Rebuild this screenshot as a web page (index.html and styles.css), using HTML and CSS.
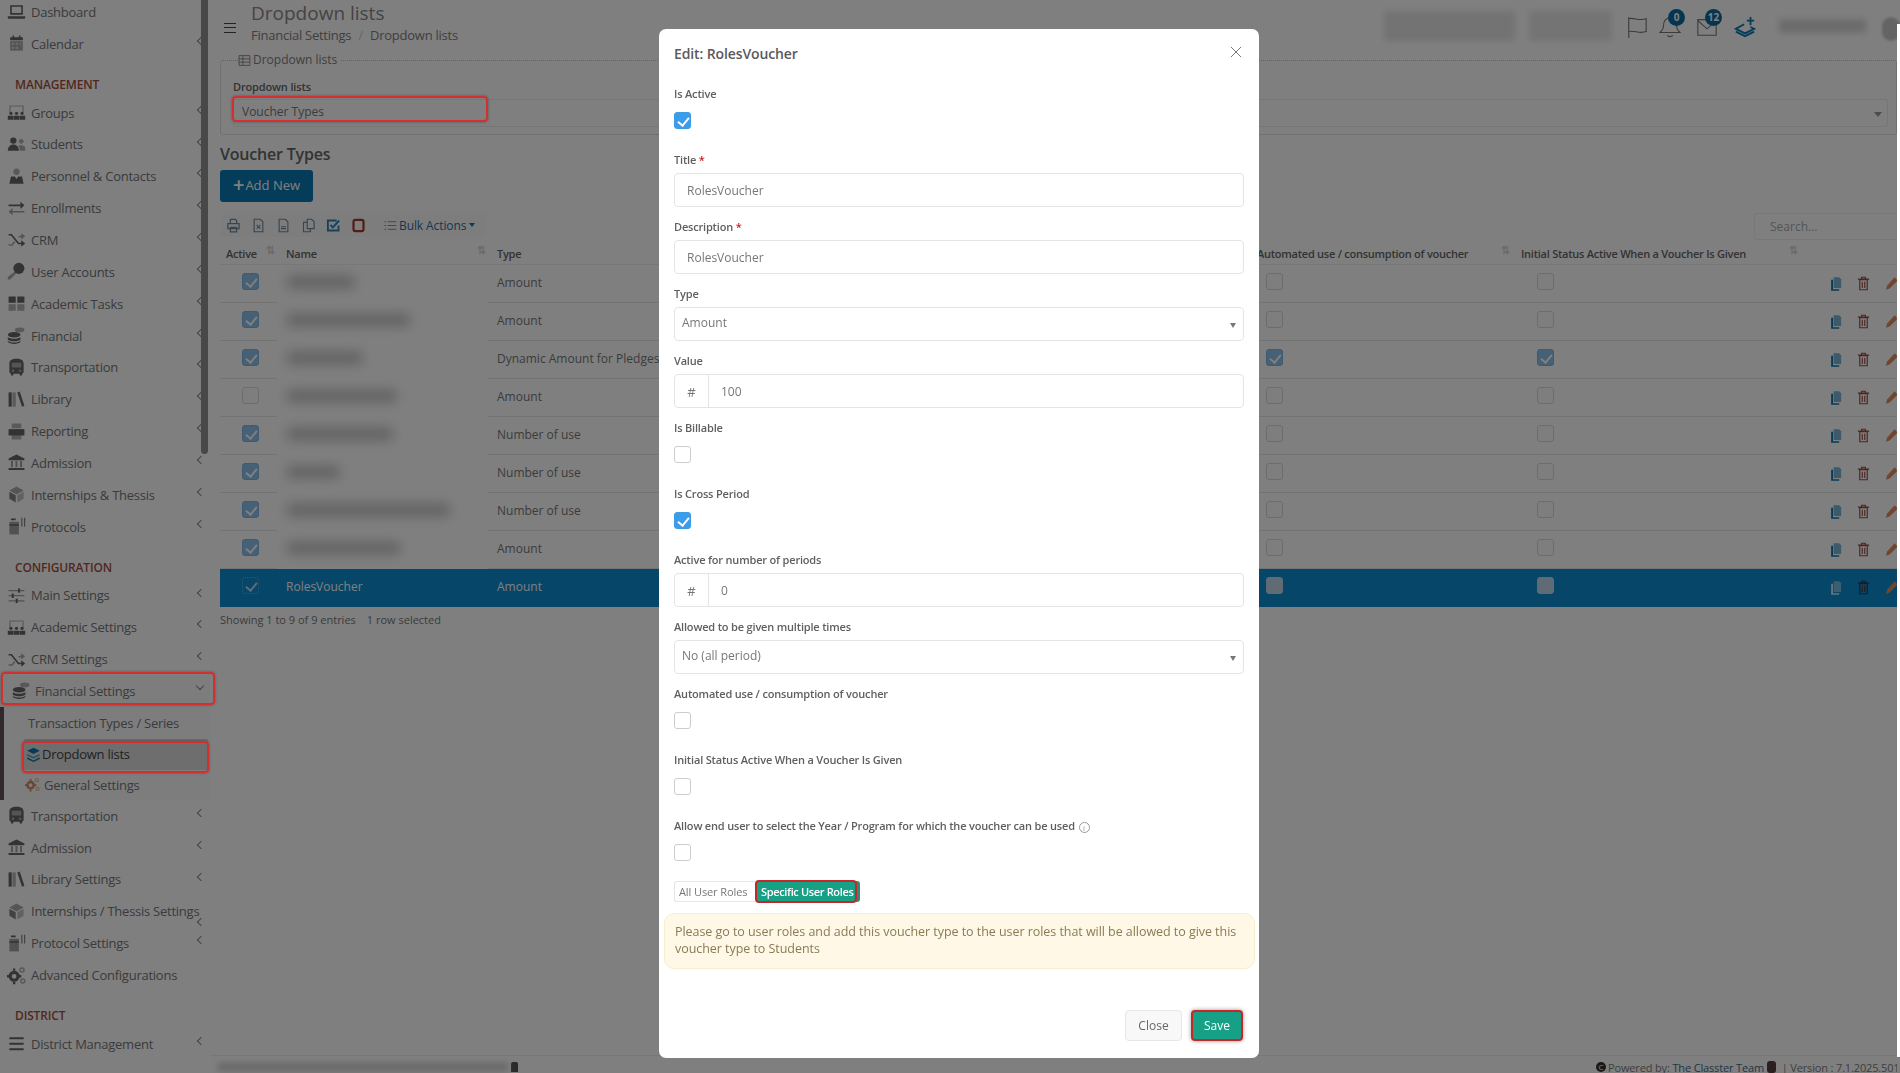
FILE: index.html
```html
<!DOCTYPE html>
<html lang="en">

<head>
    <meta charset="UTF-8">
    <title>Dropdown lists</title>
    <link rel="stylesheet" href="styles.css">
</head>

<body>
    <!-- Icon set -->
    <svg class="icon-defs" xmlns="http://www.w3.org/2000/svg">
        <symbol id="i-laptop" viewBox="0 0 24 24"><path d="M4 4h16v12H4z M6 6v8h12V6z" fill-rule="evenodd"/><path d="M1 18h22v1.500a1.500 1.500 0 0 1-1.500 1.500h-19A1.500 1.500 0 0 1 1 19.500z"/></symbol>
        <symbol id="i-calendar" viewBox="0 0 24 24"><path opacity=".55" d="M4 9h16v12H4z"/><path d="M4 4h3V2h2v2h6V2h2v2h3v4H4z"/><path fill="#fff" opacity=".5" d="M6 11h3v3H6zM11 11h3v3h-3zM16 11h2v3h-2zM6 16h3v3H6zM11 16h3v3h-3z"/></symbol>
        <symbol id="i-groups" viewBox="0 0 24 24"><path opacity=".5" d="M3 3h18v9h-1.500V4.500h-15V12H3z"/><circle cx="5" cy="13" r="2"/><circle cx="12" cy="13" r="2"/><circle cx="19" cy="13" r="2"/><path d="M1 16h7v5H1zM8.500 16h7v5h-7zM16 16h7v5h-7z"/></symbol>
        <symbol id="i-students" viewBox="0 0 24 24"><circle cx="8" cy="7" r="4"/><path d="M1 20c0-5 3-8 7-8s7 3 7 8z"/><g opacity=".5"><circle cx="18" cy="8" r="3"/><path d="M16 20c0-3-.5-5-2-6 1-1.500 7-2 9 1v5z"/></g></symbol>
        <symbol id="i-personnel" viewBox="0 0 24 24"><circle opacity=".5" cx="12" cy="6" r="4"/><path d="M5 12h5l2 3 2-3h5l2 9H3z"/></symbol>
        <symbol id="i-arrows" viewBox="0 0 24 24"><path d="M2 7h15V3.500L22 8l-5 4.500V9H2z"/><path opacity=".6" d="M22 15H7v-3.500L2 16l5 4.500V17h15z"/></symbol>
        <symbol id="i-shuffle" viewBox="0 0 24 24"><path d="M2 5h4l9 11h3v-3l5 4-5 4v-3h-4L5 7H2z"/><path opacity=".55" d="M2 18h4l3-4 1.500 1.500L7 20H2zM14 8l1 1.500 3-.5v3l5-4-5-4v3z"/></symbol>
        <symbol id="i-key" viewBox="0 0 24 24"><circle cx="15" cy="8" r="7"/><path opacity=".55" d="M10 12l2 2-8 8H1v-3z"/></symbol>
        <symbol id="i-tiles" viewBox="0 0 24 24"><path d="M2 3h9v8H2zM13 3h9v8h-9z"/><path opacity=".5" d="M2 13h9v8H2zM13 13h9v8h-9z"/></symbol>
        <symbol id="i-coins" viewBox="0 0 24 24"><ellipse opacity=".5" cx="16" cy="5" rx="6" ry="3"/><ellipse cx="9" cy="11" rx="8" ry="3.500"/><path d="M1 14c2 3 14 3 16 0v3c-2 3-14 3-16 0zM1 18.500c2 3 14 3 16 0V20c-2 3.500-14 3.500-16 0z"/></symbol>
        <symbol id="i-bus" viewBox="0 0 24 24"><path d="M12 1c6 0 9 2 9 6v10c0 1.500-1 2.500-2 3v2h-3v-2H8v2H5v-2c-1-.5-2-1.500-2-3V7c0-4 3-6 9-6z"/><path fill="#fff" opacity=".45" d="M6 6h12v6H6z"/><circle fill="#fff" opacity=".5" cx="7.500" cy="16" r="1.500"/><circle fill="#fff" opacity=".5" cx="16.500" cy="16" r="1.500"/></symbol>
        <symbol id="i-library" viewBox="0 0 24 24"><path d="M2 3h4v18H2z"/><path opacity=".5" d="M7 3h4v18H7z"/><path d="M13 3l3-1 6 18-3 1z"/></symbol>
        <symbol id="i-print" viewBox="0 0 24 24"><path opacity=".5" d="M6 2h12v6H6zM6 16h12v6H6z"/><path d="M2 9h20v8H2z"/></symbol>
        <symbol id="i-bank" viewBox="0 0 24 24"><path d="M12 2l10 5v2H2V7z"/><path opacity=".6" d="M5 10h2.500v8H5zM10.700 10h2.500v8h-2.500zM16.500 10H19v8h-2.500z"/><path d="M2 19h20v2.500H2z"/></symbol>
        <symbol id="i-box" viewBox="0 0 24 24"><path opacity=".55" d="M12 2l9 5-9 5-9-5z"/><path d="M3 8.500l8 4.500v9l-8-4.500z" opacity=".8"/><path d="M21 8.500L13 13v9l8-4.500z" opacity=".4"/></symbol>
        <symbol id="i-protocol" viewBox="0 0 24 24"><path opacity=".6" d="M3 6h12v16H3z"/><path d="M5 2h6v2H5zM3 9h12v2H3z"/><path d="M18 1h1.500v11H18zM21.500 1H23v11h-1.500z" opacity=".8"/></symbol>
        <symbol id="i-sliders" viewBox="0 0 24 24"><path d="M2 5h20v1.500H2zM2 11.500h20V13H2zM2 18h20v1.500H2z" opacity=".6"/><path d="M14 3h2.500v5.500H14zM6 9.500h2.500V15H6zM11 16h2.500v5.500H11z"/></symbol>
        <symbol id="i-gears" viewBox="0 0 24 24"><circle cx="9" cy="13" r="5" fill="none" stroke="currentColor" stroke-width="4"/><path d="M7.500 3h3v3h-3zM7.500 20h3v3h-3zM0 11.500h3v3H0zM15 11.500h3v3h-3z"/><circle opacity=".5" cx="19" cy="5" r="2.500" fill="none" stroke="currentColor" stroke-width="2"/><circle opacity=".5" cx="20" cy="19" r="2.500" fill="none" stroke="currentColor" stroke-width="2"/></symbol>
        <symbol id="i-menu" viewBox="0 0 24 24"><path d="M3 4h18v2.500H3zM3 11h18v2.500H3zM3 18h18v2.500H3z"/></symbol>
        <symbol id="i-layers" viewBox="0 0 24 24"><path d="M12 1l10 5-10 5L2 6z"/><path opacity=".7" d="M2 11l10 5 10-5v2.500l-10 5-10-5z"/><path d="M2 16.500l10 5 10-5V19l-10 5-10-5z"/></symbol>
        <symbol id="i-copy" viewBox="0 0 24 24"><path opacity=".55" d="M9 2h9l3 3v14H9z"/><path d="M5 6h3v15h10v2.500H5z"/></symbol>
        <symbol id="i-trash" viewBox="0 0 24 24"><path fill="none" stroke="currentColor" stroke-width="1.800" d="M6 6h12v16H6zM3 5h18M9 5V2h6v3M10 9v10M14 9v10"/></symbol>
        <symbol id="i-pencil" viewBox="0 0 24 24"><path d="M17 2l5 5L9 20l-6 2 2-7z"/></symbol>
        <symbol id="i-table" viewBox="0 0 24 24"><path fill="none" stroke="currentColor" stroke-width="1.600" d="M2 3h20v18H2zM2 9h20M2 15h20M9 3v18"/></symbol>
        <symbol id="i-printer" viewBox="0 0 24 24"><path fill="none" stroke="currentColor" stroke-width="2" d="M7 9V2h8l2 2v5M3 9h18v8H3zM7 15h10v7H7z"/></symbol>
        <symbol id="i-doc" viewBox="0 0 24 24"><path fill="none" stroke="currentColor" stroke-width="1.800" d="M5 2h10l4 4v16H5zM9 11l6 6M15 11l-6 6"/></symbol>
        <symbol id="i-doc2" viewBox="0 0 24 24"><path fill="none" stroke="currentColor" stroke-width="1.800" d="M5 2h10l4 4v16H5zM8 14h8M8 17h8"/></symbol>
        <symbol id="i-pages" viewBox="0 0 24 24"><path fill="none" stroke="currentColor" stroke-width="1.800" d="M10 2h7l4 4v11H10zM10 7H4v15h11v-5"/></symbol>
        <symbol id="i-checked" viewBox="0 0 24 24"><path fill="none" stroke="currentColor" stroke-width="3" d="M20 12v8H3V4h14"/><path fill="none" stroke="currentColor" stroke-width="3" d="M7 11l4 4 10-11"/></symbol>
        <symbol id="i-square" viewBox="0 0 24 24"><rect x="4" y="3" width="16" height="18" rx="3" fill="none" stroke="currentColor" stroke-width="3.500"/></symbol>
        <symbol id="i-list" viewBox="0 0 24 24"><path fill="none" stroke="currentColor" stroke-width="1.500" d="M7 5h16M7 12h16M7 19h16M1 5h3M1 12h3M1 19h3"/></symbol>
        <symbol id="i-flag" viewBox="0 0 24 24"><path fill="none" stroke="currentColor" stroke-width="1.200" d="M3 1v23M3 3c6-2 10 3 19 0v14c-8 3-13-2-19 0"/></symbol>
        <symbol id="i-bell" viewBox="0 0 24 24"><path fill="none" stroke="currentColor" stroke-width="1.200" d="M12 2c-5 0-7 4-7 8 0 5-2 6-4 8h22c-2-2-4-3-4-8 0-4-2-8-7-8zM9 21c1 2 5 2 6 0"/></symbol>
        <symbol id="i-mail" viewBox="0 0 24 24"><path fill="none" stroke="currentColor" stroke-width="1.200" d="M2 4h20v17H2zM2 5l10 9 10-9"/></symbol>
        <symbol id="i-stack" viewBox="0 0 24 24"><path fill="none" stroke="currentColor" stroke-width="2" d="M11 9L2 14l10 5 10-5-4-2M2 17l10 5 10-5M18 1v9M14 5h8"/></symbol>
        <symbol id="i-close" viewBox="0 0 12 12"><path fill="none" stroke="currentColor" stroke-width="1" d="M1 1l10 10M11 1L1 11"/></symbol>
    </svg>

    <div class="app">
        <!-- Sidebar -->
        <nav class="sidebar">
            <a class="nav-item"><svg class="nav-icon"><use href="#i-laptop"/></svg>Dashboard</a>
            <a class="nav-item has-sub"><svg class="nav-icon"><use href="#i-calendar"/></svg>Calendar</a>

            <div class="nav-title">MANAGEMENT</div>
            <a class="nav-item has-sub"><svg class="nav-icon"><use href="#i-groups"/></svg>Groups</a>
            <a class="nav-item has-sub"><svg class="nav-icon"><use href="#i-students"/></svg>Students</a>
            <a class="nav-item has-sub"><svg class="nav-icon"><use href="#i-personnel"/></svg>Personnel &amp; Contacts</a>
            <a class="nav-item has-sub"><svg class="nav-icon"><use href="#i-arrows"/></svg>Enrollments</a>
            <a class="nav-item has-sub"><svg class="nav-icon"><use href="#i-shuffle"/></svg>CRM</a>
            <a class="nav-item has-sub"><svg class="nav-icon"><use href="#i-key"/></svg>User Accounts</a>
            <a class="nav-item has-sub"><svg class="nav-icon"><use href="#i-tiles"/></svg>Academic Tasks</a>
            <a class="nav-item has-sub"><svg class="nav-icon"><use href="#i-coins"/></svg>Financial</a>
            <a class="nav-item has-sub"><svg class="nav-icon"><use href="#i-bus"/></svg>Transportation</a>
            <a class="nav-item has-sub"><svg class="nav-icon"><use href="#i-library"/></svg>Library</a>
            <a class="nav-item has-sub"><svg class="nav-icon"><use href="#i-print"/></svg>Reporting</a>
            <a class="nav-item has-sub"><svg class="nav-icon"><use href="#i-bank"/></svg>Admission</a>
            <a class="nav-item has-sub"><svg class="nav-icon"><use href="#i-box"/></svg>Internships &amp; Thessis</a>
            <a class="nav-item has-sub"><svg class="nav-icon"><use href="#i-protocol"/></svg>Protocols</a>

            <div class="nav-title">CONFIGURATION</div>
            <a class="nav-item has-sub"><svg class="nav-icon"><use href="#i-sliders"/></svg>Main Settings</a>
            <a class="nav-item has-sub"><svg class="nav-icon"><use href="#i-groups"/></svg>Academic Settings</a>
            <a class="nav-item has-sub"><svg class="nav-icon"><use href="#i-shuffle"/></svg>CRM Settings</a>
            <div class="nav-open">
                <a class="nav-item open"><svg class="nav-icon"><use href="#i-coins"/></svg>Financial Settings</a>
                <div class="nav-sub">
                    <a class="sub-item plain">Transaction Types / Series</a>
                    <a class="sub-item active"><svg class="sub-icon blue"><use href="#i-layers"/></svg>Dropdown lists</a>
                    <a class="sub-item"><svg class="sub-icon orange"><use href="#i-gears"/></svg>General Settings</a>
                </div>
            </div>
            <a class="nav-item has-sub"><svg class="nav-icon"><use href="#i-bus"/></svg>Transportation</a>
            <a class="nav-item has-sub"><svg class="nav-icon"><use href="#i-bank"/></svg>Admission</a>
            <a class="nav-item has-sub"><svg class="nav-icon"><use href="#i-library"/></svg>Library Settings</a>
            <a class="nav-item has-sub low-arrow"><svg class="nav-icon"><use href="#i-box"/></svg>Internships / Thessis Settings</a>
            <a class="nav-item has-sub"><svg class="nav-icon"><use href="#i-protocol"/></svg>Protocol Settings</a>
            <a class="nav-item"><svg class="nav-icon"><use href="#i-gears"/></svg>Advanced Configurations</a>

            <div class="nav-title">DISTRICT</div>
            <a class="nav-item has-sub"><svg class="nav-icon"><use href="#i-menu"/></svg>District Management</a>
        </nav>

        <!-- Main content -->
        <main class="main">
            <header class="topbar">
                <div class="hamburger-lines"></div>
                <div class="page-title">
                    <h1>Dropdown lists</h1>
                    <div class="breadcrumb">Financial Settings <span class="sep">/</span> Dropdown lists</div>
                </div>
                <div class="top-right">
                    <span class="smudge smudge-a"></span>
                    <span class="smudge smudge-b"></span>
                    <svg class="top-icon"><use href="#i-flag"/></svg>
                    <span class="top-badged"><svg class="top-icon"><use href="#i-bell"/></svg><span class="badge">0</span></span>
                    <span class="top-badged"><svg class="top-icon"><use href="#i-mail"/></svg><span class="badge">12</span></span>
                    <svg class="top-icon stack"><use href="#i-stack"/></svg>
                    <span class="smudge smudge-c"></span>
                    <span class="avatar"></span>
                </div>
            </header>

            <fieldset class="filter">
                <legend><svg class="legend-icon"><use href="#i-table"/></svg>Dropdown lists</legend>
                <label class="filter-label">Dropdown lists</label>
                <div class="filter-select">Voucher Types</div>
            </fieldset>

            <h2 class="list-title">Voucher Types</h2>
            <button class="add-btn"><span class="plus">+</span>Add New</button>

            <div class="toolbar-row">
                <div class="toolbar">
                    <svg class="tool"><use href="#i-printer"/></svg>
                    <svg class="tool"><use href="#i-doc"/></svg>
                    <svg class="tool"><use href="#i-doc2"/></svg>
                    <svg class="tool"><use href="#i-pages"/></svg>
                    <svg class="tool tool-blue"><use href="#i-checked"/></svg>
                    <svg class="tool tool-red"><use href="#i-square"/></svg>
                    <span class="bulk"><svg class="bulk-icon"><use href="#i-list"/></svg>Bulk Actions<span class="bulk-caret"></span></span>
                </div>
                <div class="search">Search...</div>
            </div>

            <table class="grid">
                <colgroup>
                    <col class="c-active"><col class="c-name"><col class="c-type"><col class="c-auto"><col class="c-init"><col class="c-act">
                </colgroup>
                <thead>
                    <tr>
                        <th class="sort th-active">Active</th>
                        <th class="sort">Name</th>
                        <th>Type</th>
                        <th class="sort">Automated use / consumption of voucher</th>
                        <th class="sort">Initial Status Active When a Voucher Is Given</th>
                        <th></th>
                    </tr>
                </thead>
                <tbody>
                    <tr>
                        <td class="td-active"><span class="check on"></span></td>
                        <td class="td-name"><span class="blur b1"></span></td>
                        <td>Amount</td>
                        <td class="td-auto"><span class="check"></span></td>
                        <td class="td-init"><span class="check"></span></td>
                        <td class="td-act"><svg class="act copy"><use href="#i-copy"/></svg><svg class="act trash"><use href="#i-trash"/></svg><svg class="act pencil"><use href="#i-pencil"/></svg></td>
                    </tr>
                    <tr>
                        <td class="td-active"><span class="check on"></span></td>
                        <td class="td-name"><span class="blur b2"></span></td>
                        <td>Amount</td>
                        <td class="td-auto"><span class="check"></span></td>
                        <td class="td-init"><span class="check"></span></td>
                        <td class="td-act"><svg class="act copy"><use href="#i-copy"/></svg><svg class="act trash"><use href="#i-trash"/></svg><svg class="act pencil"><use href="#i-pencil"/></svg></td>
                    </tr>
                    <tr>
                        <td class="td-active"><span class="check on"></span></td>
                        <td class="td-name"><span class="blur b3"></span></td>
                        <td>Dynamic Amount for Pledges</td>
                        <td class="td-auto"><span class="check on"></span></td>
                        <td class="td-init"><span class="check on"></span></td>
                        <td class="td-act"><svg class="act copy"><use href="#i-copy"/></svg><svg class="act trash"><use href="#i-trash"/></svg><svg class="act pencil"><use href="#i-pencil"/></svg></td>
                    </tr>
                    <tr>
                        <td class="td-active"><span class="check"></span></td>
                        <td class="td-name"><span class="blur b4"></span></td>
                        <td>Amount</td>
                        <td class="td-auto"><span class="check"></span></td>
                        <td class="td-init"><span class="check"></span></td>
                        <td class="td-act"><svg class="act copy"><use href="#i-copy"/></svg><svg class="act trash"><use href="#i-trash"/></svg><svg class="act pencil"><use href="#i-pencil"/></svg></td>
                    </tr>
                    <tr>
                        <td class="td-active"><span class="check on"></span></td>
                        <td class="td-name"><span class="blur b5"></span></td>
                        <td>Number of use</td>
                        <td class="td-auto"><span class="check"></span></td>
                        <td class="td-init"><span class="check"></span></td>
                        <td class="td-act"><svg class="act copy"><use href="#i-copy"/></svg><svg class="act trash"><use href="#i-trash"/></svg><svg class="act pencil"><use href="#i-pencil"/></svg></td>
                    </tr>
                    <tr>
                        <td class="td-active"><span class="check on"></span></td>
                        <td class="td-name"><span class="blur b6"></span></td>
                        <td>Number of use</td>
                        <td class="td-auto"><span class="check"></span></td>
                        <td class="td-init"><span class="check"></span></td>
                        <td class="td-act"><svg class="act copy"><use href="#i-copy"/></svg><svg class="act trash"><use href="#i-trash"/></svg><svg class="act pencil"><use href="#i-pencil"/></svg></td>
                    </tr>
                    <tr>
                        <td class="td-active"><span class="check on"></span></td>
                        <td class="td-name"><span class="blur b7"></span></td>
                        <td>Number of use</td>
                        <td class="td-auto"><span class="check"></span></td>
                        <td class="td-init"><span class="check"></span></td>
                        <td class="td-act"><svg class="act copy"><use href="#i-copy"/></svg><svg class="act trash"><use href="#i-trash"/></svg><svg class="act pencil"><use href="#i-pencil"/></svg></td>
                    </tr>
                    <tr>
                        <td class="td-active"><span class="check on"></span></td>
                        <td class="td-name"><span class="blur b8"></span></td>
                        <td>Amount</td>
                        <td class="td-auto"><span class="check"></span></td>
                        <td class="td-init"><span class="check"></span></td>
                        <td class="td-act"><svg class="act copy"><use href="#i-copy"/></svg><svg class="act trash"><use href="#i-trash"/></svg><svg class="act pencil"><use href="#i-pencil"/></svg></td>
                    </tr>
                    <tr class="selected">
                        <td class="td-active"><span class="check on"></span></td>
                        <td>RolesVoucher</td>
                        <td>Amount</td>
                        <td class="td-auto"><span class="check"></span></td>
                        <td class="td-init"><span class="check"></span></td>
                        <td class="td-act"><svg class="act copy"><use href="#i-copy"/></svg><svg class="act trash"><use href="#i-trash"/></svg><svg class="act pencil"><use href="#i-pencil"/></svg></td>
                    </tr>
                </tbody>
            </table>

            <div class="grid-info"><span>Showing 1 to 9 of 9 entries</span><span>1 row selected</span></div>

            <footer class="footer">
                <span class="foot-smudge"></span>
                <span class="foot-pin"></span>
                <span class="foot-text"><span class="foot-c">C</span>Powered by: <a>The Classter Team</a> <span class="foot-logo"></span> | Version : 7.1.2025.5019</span>
            </footer>
        </main>
    </div>

    <!-- Modal layer -->
    <div class="backdrop"></div>

    <!-- Red marks drawn on the screenshot -->
    <div class="mark mark-select"></div>
    <div class="mark mark-fin"></div>
    <div class="mark mark-sub"></div>
    <div class="edge-strip"></div>

    <div class="modal-wrap">
        <div class="modal">
            <div class="modal-header">
                <div class="modal-title">Edit: RolesVoucher</div>
                <svg class="modal-close"><use href="#i-close"/></svg>
            </div>
            <div class="modal-body">
                <div class="check-group">
                    <label>Is Active</label>
                    <span class="box on"></span>
                </div>
                <div class="form-group">
                    <label>Title <span class="req">*</span></label>
                    <div class="field">RolesVoucher</div>
                </div>
                <div class="form-group">
                    <label>Description <span class="req">*</span></label>
                    <div class="field">RolesVoucher</div>
                </div>
                <div class="form-group">
                    <label>Type</label>
                    <div class="field field-select">Amount</div>
                </div>
                <div class="form-group">
                    <label>Value</label>
                    <div class="field field-addon"><span class="addon">#</span><span class="addon-value">100</span></div>
                </div>
                <div class="check-group">
                    <label>Is Billable</label>
                    <span class="box"></span>
                </div>
                <div class="check-group">
                    <label>Is Cross Period</label>
                    <span class="box on"></span>
                </div>
                <div class="form-group">
                    <label>Active for number of periods</label>
                    <div class="field field-addon"><span class="addon">#</span><span class="addon-value">0</span></div>
                </div>
                <div class="form-group">
                    <label>Allowed to be given multiple times</label>
                    <div class="field field-select">No (all period)</div>
                </div>
                <div class="check-group">
                    <label>Automated use / consumption of voucher</label>
                    <span class="box"></span>
                </div>
                <div class="check-group">
                    <label>Initial Status Active When a Voucher Is Given</label>
                    <span class="box"></span>
                </div>
                <div class="check-group last">
                    <label>Allow end user to select the Year / Program for which the voucher can be used <span class="info">i</span></label>
                    <span class="box"></span>
                </div>
                <div class="segment">
                    <span class="seg">All User Roles</span>
                    <span class="seg seg-on">Specific User Roles</span>
                </div>
                <div class="alert">Please go to user roles and add this voucher type to the user roles that will be allowed to give this voucher type to Students</div>
            </div>
            <div class="modal-footer">
                <button class="btn-close">Close</button>
                <button class="btn-save">Save</button>
            </div>
        </div>
    </div>
</body>

</html>
```

FILE: styles.css
```css
* {
    box-sizing: border-box;
}

html,
body {
    margin: 0;
    height: 100%;
    overflow: hidden;
}

body {
    font-family: "Open Sans", "Liberation Sans", sans-serif;
    font-size: 12px;
    color: #777;
    background-color: #ffffff;
}

.icon-defs {
    position: absolute;
    width: 0;
    height: 0;
}

.app {
    display: flex;
    height: 1073px;
}

/* Sidebar */
.sidebar {
    width: 210px;
    flex-shrink: 0;
    height: 1073px;
    overflow: hidden;
    margin-top: -4px;
    position: relative;
    color: #747678;
    font-size: 13px;
    letter-spacing: -0.25px;
}

/* sidebar scrollbar thumb */
.sidebar::after {
    content: "";
    position: absolute;
    left: 201px;
    top: 0;
    width: 7px;
    height: 458px;
    border-radius: 4px;
    background-color: #909090;
}

.nav-item {
    display: flex;
    align-items: center;
    height: 31.85px;
    padding-left: 7px;
    white-space: nowrap;
    position: relative;
}

.nav-icon {
    width: 19px;
    height: 19px;
    margin-right: 5px;
    flex-shrink: 0;
    fill: #666;
    color: #666;
}

.has-sub::after {
    content: "";
    position: absolute;
    left: 198px;
    top: 10px;
    width: 5px;
    height: 5px;
    border-left: 1px solid #888;
    border-bottom: 1px solid #888;
    transform: rotate(45deg);
}

.low-arrow::after {
    top: 24px;
}

.nav-title {
    height: 37px;
    padding: 16px 0 0 15px;
    font-size: 12px;
    line-height: 17px;
    font-weight: 600;
    letter-spacing: -0.15px;
    color: #a5503c;
}

.nav-open {
    background-color: #fbfbfb;
}

.nav-item.open {
    padding-left: 12px;
}

.nav-item.open .nav-icon {
    margin-right: 4px;
}

.nav-item.open::after {
    content: "";
    position: absolute;
    left: 197px;
    top: 8px;
    width: 5px;
    height: 5px;
    border-left: 1px solid #888;
    border-bottom: 1px solid #888;
    transform: rotate(-45deg);
}

.nav-sub {
    border-left: 4px solid #5f5254;
    padding-top: 1px;
    height: 93px;
}

.sub-item {
    display: flex;
    align-items: center;
    height: 30px;
    padding-left: 21px;
    white-space: nowrap;
}

.sub-item.plain {
    padding-left: 24px;
    height: 31px;
}

.sub-item.active {
    color: #444;
    background-color: #dcdcdc;
    margin: 0 2px 0 20px;
    padding-left: 2px;
    height: 31px;
}

.sub-icon {
    width: 15px;
    height: 15px;
    margin-right: 1px;
    flex-shrink: 0;
}

.sub-item:last-child .sub-icon {
    margin-right: 4px;
}

.blue {
    fill: #0b79b3;
    color: #0b79b3;
}

.orange {
    fill: #d9886a;
    color: #d9886a;
}

/* Main */
.main {
    flex: 1;
    min-width: 0;
    height: 1073px;
    padding: 0 3px 0 10px;
    display: flex;
    flex-direction: column;
    position: relative;
    overflow: hidden;
}

.topbar {
    display: flex;
    height: 59px;
    flex-shrink: 0;
}

.hamburger-lines {
    width: 12px;
    height: 10px;
    margin: 23px 15px 0 4px;
    border-top: 1px solid #444;
    border-bottom: 1px solid #444;
    position: relative;
    flex-shrink: 0;
}

.hamburger-lines::after {
    content: "";
    position: absolute;
    left: 0;
    right: 0;
    top: 3px;
    border-top: 1px solid #444;
}

.page-title h1 {
    margin: 0;
    font-size: 19px;
    line-height: 26px;
    font-weight: 400;
    color: #888;
    white-space: nowrap;
}

.breadcrumb {
    font-size: 13px;
    line-height: 18px;
    letter-spacing: -0.25px;
    color: #808080;
    white-space: nowrap;
}

.breadcrumb .sep {
    color: #ccc;
    margin: 0 4px;
}

.top-right {
    margin-left: auto;
    display: flex;
    align-items: flex-start;
    padding-top: 11px;
    flex-shrink: 0;
}

.smudge {
    display: block;
    height: 30px;
    background-color: #e6e6e6;
    filter: blur(3px);
}

.smudge-a {
    width: 131px;
    margin-right: 14px;
}

.smudge-b {
    width: 83px;
    margin-right: 14px;
    background-color: #e8e8e8;
}

.smudge-c {
    width: 87px;
    height: 14px;
    margin: 8px 16px 0 23px;
    background-color: #d8d8d8;
}

.top-icon {
    display: block;
    width: 22px;
    height: 24px;
    color: #777;
    margin: 4px 11px 0 0;
}

.top-icon.stack {
    color: #0b79b3;
    margin: 4px 0 0 1px;
}

.top-badged {
    position: relative;
    display: block;
    margin-right: 15px;
}

.top-badged .top-icon {
    margin-right: 0;
}

.badge {
    position: absolute;
    left: 9px;
    top: -2px;
    width: 17px;
    height: 17px;
    border-radius: 50%;
    background-color: #0a6aa0;
    color: #fff;
    font-size: 10px;
    font-weight: 700;
    line-height: 17px;
    text-align: center;
}

.avatar {
    display: block;
    width: 18px;
    height: 24px;
    margin: 6px -3px 0 0;
    border-radius: 9px;
    background-color: #c9c9c9;
    filter: blur(1px);
}

/* Filter box */
.filter {
    margin: -9px 0 0;
    padding: 8px 8px 8px 12px;
    border: 1px dotted #c4c4c4;
    border-radius: 3px;
    min-width: 0;
    height: 85px;
    flex-shrink: 0;
}

.filter legend {
    margin-left: 5px;
    padding: 0 4px 0 0;
    display: flex;
    align-items: center;
    font-size: 12px;
    line-height: 20px;
    color: #808080;
}

.legend-icon {
    width: 13px;
    height: 13px;
    margin-right: 2px;
    color: #808080;
}

.filter-label {
    display: block;
    font-size: 11px;
    line-height: 17px;
    font-weight: 600;
    letter-spacing: -0.15px;
    color: #666;
    margin-bottom: 4px;
}

.filter-select {
    height: 28px;
    padding-left: 8px;
    line-height: 24px;
    font-size: 12px;
    color: #777;
    background-color: #fff;
    border: 1px solid #ececec;
    border-radius: 3px;
    position: relative;
}

.filter-select::after {
    content: "";
    position: absolute;
    right: 5px;
    top: 12px;
    border-left: 4px solid transparent;
    border-right: 4px solid transparent;
    border-top: 5px solid #999;
}

.list-title {
    margin: 7px 0 4px;
    font-size: 16px;
    line-height: 24px;
    font-weight: 600;
    letter-spacing: -0.2px;
    color: #666;
    flex-shrink: 0;
}

.add-btn {
    width: 93px;
    height: 32px;
    padding: 0 0 3px;
    border: none;
    border-radius: 3px;
    background-color: #0a78b4;
    color: #fff;
    font-family: inherit;
    font-size: 13px;
    flex-shrink: 0;
}

.plus {
    font-size: 20px;
    font-weight: 600;
    line-height: 18px;
    vertical-align: -2px;
    margin-right: 1px;
}

.toolbar-row {
    display: flex;
    justify-content: space-between;
    margin-top: 11px;
    height: 27px;
    flex-shrink: 0;
}

.toolbar {
    display: flex;
    align-items: center;
    height: 24px;
    width: 266px;
    background-color: #fbfbfb;
    border-radius: 4px;
    padding-left: 5px;
    margin-left: 1px;
}

.tool {
    width: 15px;
    height: 15px;
    margin-right: 10px;
    color: #6d8aa0;
    flex-shrink: 0;
}

.tool-blue {
    color: #2a83bf;
}

.tool-red {
    color: #a03a2e;
    margin-right: 18px;
}

.bulk {
    display: flex;
    align-items: center;
    color: #2f6f9b;
    font-size: 12px;
    letter-spacing: -0.1px;
    white-space: nowrap;
}

.bulk-icon {
    width: 13px;
    height: 13px;
    margin-right: 2px;
    color: #5a7d96;
}

.bulk-caret {
    margin-left: 3px;
    border-left: 3px solid transparent;
    border-right: 3px solid transparent;
    border-top: 4px solid #0b79b3;
}

.search {
    width: 143px;
    height: 27px;
    padding-left: 15px;
    line-height: 26px;
    font-size: 12px;
    color: #aaa;
    border: 1px solid #eee;
    border-right: none;
    border-radius: 4px 0 0 4px;
}

/* Table */
.grid {
    width: 1677px;
    table-layout: fixed;
    border-collapse: collapse;
    flex-shrink: 0;
}

.c-active { width: 57px; }
.c-name { width: 211px; }
.c-type { width: 760px; }
.c-auto { width: 264px; }
.c-init { width: 288px; }
.c-act { width: 97px; }

.grid th {
    height: 24px;
    padding: 4px 0 0 9px;
    text-align: left;
    font-size: 11px;
    font-weight: 600;
    letter-spacing: -0.25px;
    color: #666;
    border-bottom: 1px solid #eee;
    white-space: nowrap;
    position: relative;
}

.grid .th-active {
    padding-left: 6px;
}

/* little sort arrows on the header */
.grid th.sort::after {
    content: "⇅";
    position: absolute;
    right: 2px;
    top: 2px;
    font-size: 11px;
    color: #d4d4d4;
}

.grid td {
    height: 38px;
    padding: 0 0 2px 9px;
    font-size: 12px;
    color: #777;
    border-bottom: 1px solid #e6e6e6;
    white-space: nowrap;
    overflow: hidden;
}

.grid .td-name {
    border-bottom-color: transparent;
}

.grid .td-active {
    padding-left: 22px;
}

.grid .td-auto {
    padding-left: 18px;
}

.grid .td-init {
    padding-left: 25px;
}

.grid .td-act {
    padding-left: 28px;
    overflow: hidden;
}

.check {
    display: block;
    width: 17px;
    height: 17px;
    margin-top: -2px;
    border: 1px solid #d8d8d8;
    border-radius: 3px;
    background-color: #fdfdfd;
    position: relative;
}

.check.on {
    background-color: #8cc0ec;
    border-color: #7fb5e2;
}

.check.on::after,
.box.on::after {
    content: "";
    position: absolute;
    left: 5px;
    top: 2px;
    width: 5px;
    height: 9px;
    border-right: 2px solid #fff;
    border-bottom: 2px solid #fff;
    transform: rotate(40deg);
}

.blur {
    display: block;
    height: 14px;
    border-radius: 7px;
    background-color: #c9c9c9;
    filter: blur(6px);
}

.b1 { width: 70px; }
.b2 { width: 125px; }
.b3 { width: 78px; }
.b4 { width: 112px; }
.b5 { width: 108px; }
.b6 { width: 55px; }
.b7 { width: 165px; }
.b8 { width: 115px; }

.act {
    width: 15px;
    height: 15px;
    margin-right: 13px;
    vertical-align: middle;
}

.act.copy {
    fill: #0b79b3;
    color: #0b79b3;
}

.act.trash {
    color: #9a4a40;
}

.act.pencil {
    fill: #e08c62;
}

.selected td {
    background-color: #0a8cd2;
    color: #fff;
    border-bottom-color: #0a8cd2;
}

.selected .check {
    background-color: #c2d6e6;
    border-color: #c2d6e6;
}

.selected .check.on {
    background-color: #0a8cd2;
    border-color: #5fb0de;
    border-style: dotted;
}

.selected .check.on::after {
    border-color: #c2d6e6;
}

.selected .act.copy {
    fill: #d4e6f3;
    color: #d4e6f3;
}

.selected .act.trash {
    color: #4a2f2f;
}

.grid-info {
    display: flex;
    gap: 11px;
    margin-top: 5px;
    font-size: 11px;
    line-height: 16px;
    color: #777;
    flex-shrink: 0;
}

.footer {
    margin-top: auto;
    height: 18px;
    padding-top: 5px;
    border-top: 1px solid #eee;
    display: flex;
    align-items: center;
    margin-left: -10px;
    flex-shrink: 0;
    font-size: 11px;
    letter-spacing: -0.15px;
    color: #808080;
    white-space: nowrap;
    overflow: hidden;
}

.foot-smudge {
    display: block;
    width: 290px;
    height: 8px;
    margin-left: 8px;
    background-color: #cfcfcf;
    filter: blur(3px);
    flex-shrink: 0;
}

.foot-pin {
    display: block;
    width: 7px;
    height: 10px;
    margin-left: 3px;
    background-color: #555;
    border-radius: 2px 2px 0 0;
    flex-shrink: 0;
}

.foot-text {
    margin-left: 1078px;
    display: flex;
    align-items: center;
    white-space: pre;
}

.foot-text a {
    color: #3e6c8f;
}

.foot-c {
    width: 10px;
    height: 10px;
    margin-right: 2px;
    border-radius: 50%;
    background-color: #333;
    color: #fff;
    font-size: 8px;
    line-height: 10px;
    text-align: center;
}

.foot-logo {
    width: 9px;
    height: 12px;
    margin: 0 3px;
    border-radius: 3px;
    background-color: #5a3f3f;
}

/* Dim layer behind the dialog */
.backdrop {
    position: fixed;
    inset: 0;
    background-color: rgba(0, 0, 0, 0.5);
}

.mark {
    position: fixed;
    border: 2px solid #d32f2f;
    border-radius: 4px;
    box-shadow: 0 0 3px rgba(0, 0, 0, 0.35);
}

.mark-select {
    left: 232px;
    top: 96px;
    width: 256px;
    height: 26px;
}

.mark-fin {
    left: 1px;
    top: 672px;
    width: 214px;
    height: 33px;
}

.mark-sub {
    left: 22px;
    top: 741px;
    width: 187px;
    height: 32px;
}

.edge-strip {
    position: fixed;
    right: 0;
    top: 24px;
    bottom: 16px;
    width: 3px;
    background-color: #ffffff;
}

/* Dialog */
.modal-wrap {
    position: fixed;
    inset: 0;
    padding: 29px 0 15px 18px;
    display: flex;
    justify-content: center;
}

.modal {
    width: 600px;
    height: 1029px;
    background-color: #ffffff;
    border-radius: 7px;
    display: flex;
    flex-direction: column;
    color: #666;
}

.modal-header {
    height: 56px;
    padding: 0 17px 0 15px;
    display: flex;
    justify-content: space-between;
    flex-shrink: 0;
}

.modal-title {
    margin-top: 15px;
    font-size: 14px;
    line-height: 20px;
    font-weight: 600;
    letter-spacing: -0.12px;
    color: #5a5a5a;
}

.modal-close {
    width: 12px;
    height: 12px;
    margin-top: 17px;
    color: #777;
}

.modal-body {
    padding: 0 15px;
}

.modal-body label {
    display: block;
    font-size: 11px;
    line-height: 17px;
    font-weight: 600;
    letter-spacing: -0.18px;
    color: #5f5f5f;
    white-space: nowrap;
}

.req {
    color: #d01c1c;
}

.info {
    display: inline-block;
    width: 11px;
    height: 11px;
    margin-left: 1px;
    border: 1px solid #999;
    border-radius: 50%;
    color: #999;
    font-size: 8px;
    line-height: 9px;
    font-weight: 400;
    text-align: center;
    vertical-align: -1px;
}

.form-group {
    height: 56px;
    margin-bottom: 11px;
}

.form-group label {
    margin-bottom: 5px;
}

.field {
    height: 34px;
    padding-left: 12px;
    line-height: 34px;
    font-size: 12px;
    color: #777;
    border: 1px solid #e4e4e4;
    border-radius: 4px;
}

.field-select {
    padding-left: 7px;
    line-height: 29px;
    position: relative;
}

.field-select::after {
    content: "";
    position: absolute;
    right: 7px;
    top: 15px;
    border-left: 3.5px solid transparent;
    border-right: 3.5px solid transparent;
    border-top: 5px solid #777;
}

.field-addon {
    display: flex;
    padding-left: 0;
}

.addon {
    width: 34px;
    text-align: center;
    border-right: 1px solid #e4e4e4;
    font-size: 13px;
}

.addon-value {
    padding-left: 12px;
}

.check-group {
    height: 55px;
    margin-bottom: 11px;
}

.check-group.last {
    margin-bottom: 9px;
}

.check-group label {
    margin-bottom: 10px;
}

.box {
    display: block;
    width: 17px;
    height: 17px;
    border: 1px solid #ccc;
    border-radius: 3px;
    position: relative;
}

.box.on {
    background-color: #3b9ce8;
    border-color: #3b9ce8;
}

.segment {
    display: flex;
    height: 21px;
}

.seg {
    padding: 0 4px;
    width: 81px;
    font-size: 11px;
    letter-spacing: -0.1px;
    line-height: 20px;
    color: #777;
    border: 1px solid #e6e6e6;
    border-right: none;
    border-radius: 3px 0 0 3px;
    white-space: nowrap;
}

.seg-on {
    width: 102px;
    padding: 0 0 0 4px;
    line-height: 20px;
    font-weight: 600;
    letter-spacing: -0.35px;
    color: #fff;
    background-color: #16a085;
    border: 2px solid #c62828;
    border-radius: 4px;
    margin: -1px 0;
    height: 23px;
    box-shadow: 4px 0 0 -1px #2a8c78;
}

.alert {
    margin: 11px -11px 0 -10px;
    height: 56px;
    padding: 9px 10px 0 10px;
    font-size: 12.500px;
    line-height: 17px;
    letter-spacing: -0.05px;
    color: #8a7b55;
    background-color: #fff8e7;
    border: 1px solid #faedcd;
    border-radius: 10px;
}

.modal-footer {
    margin-top: auto;
    padding: 0 16px 17px 0;
    display: flex;
    justify-content: flex-end;
    gap: 9px;
}

.btn-close,
.btn-save {
    height: 31px;
    padding: 0;
    font-family: inherit;
    font-size: 12px;
    border-radius: 4px;
}

.btn-close {
    width: 57px;
    color: #666;
    background-color: #f8f8f8;
    border: 1px solid #e6e6e6;
}

.btn-save {
    width: 52px;
    color: #fff;
    background-color: #16a085;
    border: 2px solid #c62828;
    box-shadow: 0 0 4px rgba(0, 0, 0, 0.4);
}
```
